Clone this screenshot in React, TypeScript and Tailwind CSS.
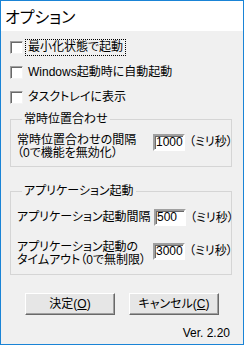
import React from 'react';

const font = "[font-family:'Liberation_Sans','Noto_Sans_CJK_JP',sans-serif] [font-feature-settings:'palt']";

function CheckRow({ label, focused }: { label: string; focused?: boolean }) {
  return (
    <div className="flex items-center h-[13px] mb-[12px] shrink-0">
      <span className="w-[13px] h-[13px] shrink-0 bg-white border border-t-[#a0a0a0] border-l-[#a0a0a0] border-b-[#f4f4f4] border-r-[#f4f4f4] shadow-[inset_1px_1px_0_#696969]" />
      <span
        className={
          'ml-[4px] px-[1px] leading-[13px] whitespace-nowrap ' +
          (focused ? 'outline outline-1 outline-dotted outline-black outline-offset-[1px]' : '')
        }
      >
        {label}
      </span>
    </div>
  );
}

function NumBox({ value }: { value: string }) {
  return (
    <div className="w-[32px] h-[17px] shrink-0 bg-white border-2 border-t-[#a0a0a0] border-l-[#a0a0a0] border-b-[#fff] border-r-[#fff] shadow-[inset_1px_1px_0_#696969] pl-[1px] text-[12px] leading-[13px]">
      {value}
    </div>
  );
}

function Unit() {
  return <span className="ml-[4px] leading-[16px] whitespace-nowrap shrink-0">（ミリ秒）</span>;
}

export default function App() {
  return (
    <div className={`w-[244px] h-[345px] overflow-hidden border border-[#1a84d6] bg-[#f0f0f0] flex flex-col text-[12px] text-black ${font}`}>
      {/* title bar */}
      <div className="h-[30px] shrink-0 bg-white flex items-center pl-[4px] pb-[1px] text-[16px] leading-[20px] [font-family:'Noto_Sans_CJK_JP',sans-serif] [font-feature-settings:'palt']">
        オプション
      </div>

      <div className="flex-1 pl-[9px] pr-[11px] pt-[10px] flex flex-col">
        <CheckRow label="最小化状態で起動" focused />
        <CheckRow label="Windows起動時に自動起動" />
        <CheckRow label="タスクトレイに表示" />

        {/* always-on-top group */}
        <fieldset className="mt-[-3px] border border-[#d5d5d5] pl-[6px] pr-[2px] pt-[8px] pb-[6px] min-w-0">
          <legend className="ml-[5px] px-[2px] leading-[13px]">常時位置合わせ</legend>
          <div className="flex items-start">
            <div className="w-[136px] shrink-0 leading-[13px] whitespace-nowrap">
              常時位置合わせの間隔
              <br />
              （0で機能を無効化）
            </div>
            <NumBox value="1000" />
            <Unit />
          </div>
        </fieldset>

        {/* app launch group */}
        <fieldset className="mt-[18px] border border-[#d5d5d5] pl-[6px] pr-[2px] pt-[11px] pb-[7px] min-w-0">
          <legend className="ml-[5px] px-[2px] leading-[13px]">アプリケーション起動</legend>
          <div className="flex items-center">
            <div className="w-[137px] shrink-0 leading-[13px] whitespace-nowrap">アプリケーション起動間隔</div>
            <NumBox value="500" />
            <Unit />
          </div>
          <div className="flex items-start mt-[17px]">
            <div className="w-[136px] shrink-0 leading-[13px] mt-[-2px] whitespace-nowrap">
              アプリケーション起動の
              <br />
              タイムアウト（0で無制限）
            </div>
            <NumBox value="3000" />
            <Unit />
          </div>
        </fieldset>

        {/* buttons */}
        <div className="flex mt-[18px] ml-[15px] gap-[14px]">
          <button className="w-[90px] h-[22px] bg-[#e6e6e6] border border-t-[#fff] border-l-[#fff] border-b-[#696969] border-r-[#696969] shadow-[inset_-1px_-1px_0_#a0a0a0] leading-[13px]">
            決定(<span className="underline">O</span>)
          </button>
          <button className="w-[90px] h-[22px] bg-[#e6e6e6] border border-t-[#fff] border-l-[#fff] border-b-[#696969] border-r-[#696969] shadow-[inset_-1px_-1px_0_#a0a0a0] leading-[13px]">
            キャンセル(<span className="underline">C</span>)
          </button>
        </div>

        <div className="mt-[12px] self-end pr-[2px] leading-[13px]">Ver. 2.20</div>
      </div>
    </div>
  );
}
